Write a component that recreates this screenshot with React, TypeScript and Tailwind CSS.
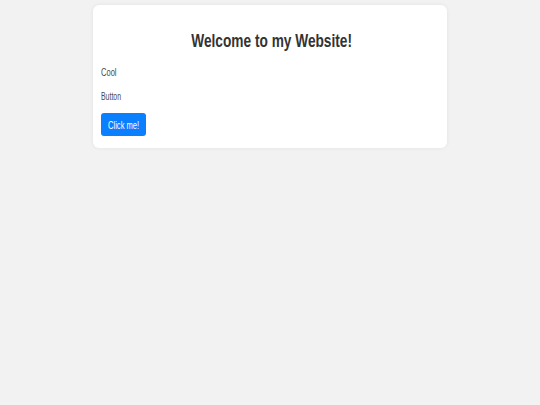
import React from "react";

export default function App() {
  return (
    <div
      className="w-[540px] h-[405px] bg-[#f2f2f2] pt-[5px] pl-[93px]"
      style={{ fontFamily: '"Liberation Sans", Arial, sans-serif' }}
    >
      <div className="w-[354px] h-[143px] bg-white rounded-[6px] shadow-[0_0_4px_rgba(0,0,0,0.07)] pl-[8px] pt-[25px] flex flex-col items-start">
        <div className="w-full flex justify-center pr-[4px]">
          <h1 className="text-[18.5px] leading-[22px] font-bold text-[#333333] scale-x-[0.74] origin-center whitespace-nowrap">
            Welcome to my Website!
          </h1>
        </div>
        <p className="mt-[14px] text-[10.5px] leading-[12px] text-[#4a4a4a] scale-x-[0.72] origin-left whitespace-nowrap">
          Cool
        </p>
        <p className="mt-[12px] text-[10.5px] leading-[12px] text-[#4a4a4a] scale-x-[0.66] origin-left whitespace-nowrap">
          Button
        </p>
        <button className="mt-[11px] w-[45px] h-[23px] bg-[#0a80ff] rounded-[3px] flex items-center justify-center">
          <span className="text-[10.5px] leading-[12px] text-white scale-x-[0.72] whitespace-nowrap">
            Click me!
          </span>
        </button>
      </div>
    </div>
  );
}
